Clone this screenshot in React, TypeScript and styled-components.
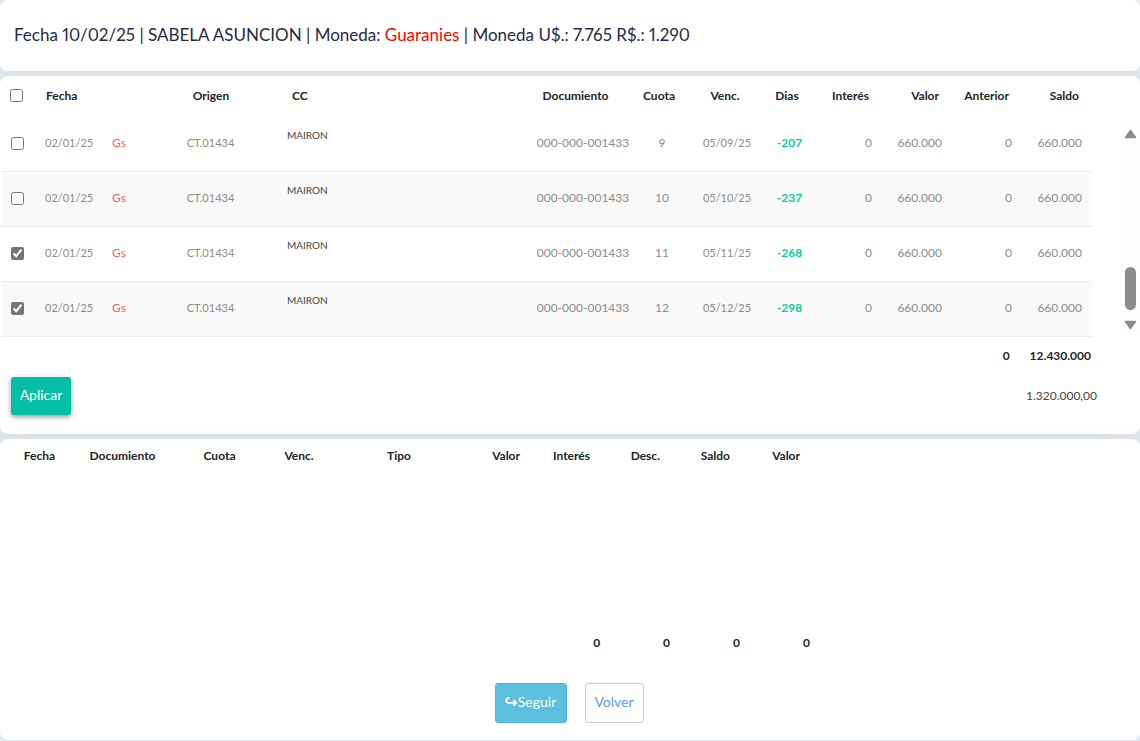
import React, { useState } from 'react';
import styled, { createGlobalStyle } from 'styled-components';

type Align = 'left' | 'center' | 'right';

const GlobalStyle = createGlobalStyle`
  *, *::before, *::after { box-sizing: border-box; }
  body {
    margin: 0;
    background: #e6eaf1;
    color: #212529;
    font-family: Lato, "Liberation Sans", sans-serif;
    font-size: 12px;
    line-height: 18px;
  }
`;

const Page = styled.main`
  display: flex;
  flex-direction: column;
  gap: 5px;
  padding-bottom: 1px;
`;

const Panel = styled.section`
  background: #fff;
  border-radius: 8px;
  box-shadow: 0 0 20px rgba(154, 165, 171, 0.15);
`;

const TitlePanel = styled(Panel)`
  padding: 23px 14px 24px;
`;

const Title = styled.h1`
  margin: 0;
  color: #272a48;
  font-size: 17px;
  font-variant-numeric: proportional-nums;
  font-weight: 400;
  line-height: 24px;
`;

const Currency = styled.span`
  color: #f00;
`;

const HeadWrap = styled.div`
  padding: 5px 51px 7px 0;
`;

const Grid = styled.table`
  width: 100%;
  table-layout: fixed;
  border-collapse: separate;
  border-spacing: 0;
`;

const Col = styled.col<{ $w?: number }>`
  width: ${({ $w }) => ($w ? `${$w}px` : 'auto')};
`;

const Th = styled.th<{ $align?: Align }>`
  height: 29px;
  padding: 0 10px;
  font-weight: 700;
  text-align: ${({ $align = 'left' }) => $align};
  white-space: nowrap;
`;

const Check = styled.input`
  display: block;
  width: 13px;
  height: 13px;
  margin: 0;
  accent-color: #757575;
`;

const BodyWrap = styled.div`
  display: flex;
  justify-content: space-between;
  gap: 29px;
  padding-left: 1px;
`;

const Row = styled.tr`
  &:nth-child(even) { background: #f9f9f9; }
`;

const Td = styled.td<{ $align?: Align }>`
  height: 55px;
  padding: 0 ${({ $align }) => ($align === 'center' ? 0 : 10)}px 2px;
  border-bottom: 1px solid #e9ebed;
  color: #8c8c8c;
  text-align: ${({ $align = 'left' }) => $align};
  white-space: nowrap;
`;

const CodeTd = styled(Td)`
  font-size: 11px;
`;

const CurrencyTd = styled(Td)`
  color: #f95f68;
`;

const ClientTd = styled(Td)`
  padding-top: 9px;
  color: #444;
  font-size: 10px;
  vertical-align: top;
`;

const DaysTd = styled(Td)`
  color: #0acf97;
  font-weight: 700;
`;

const Scrollbar = styled.div`
  display: flex;
  flex: none;
  flex-direction: column;
  align-items: center;
  width: 19px;
  margin-top: 2px;
  padding: 10px 0 7px;
  background: #fcfcfc;
`;

const Thumb = styled.div`
  width: 11px;
  height: 43px;
  margin: auto 0 10px;
  border-radius: 6px;
  background: #8b8b8b;
`;

const Total = styled.div`
  display: flex;
  justify-content: flex-end;
  gap: 20px;
  padding: 10px 49px 0 0;
  font-weight: 700;
`;

const ApplyBar = styled.div`
  display: flex;
  align-items: center;
  justify-content: space-between;
  padding: 12px 43px 19px 11px;
`;

const Amount = styled.output`
  color: #444;
`;

const Button = styled.button`
  height: 40px;
  padding: 0 0 2px;
  border: 1px solid transparent;
  border-radius: 3px;
  font-family: inherit;
  font-size: 14px;
  line-height: 20px;
  cursor: pointer;
`;

const ApplyButton = styled(Button)`
  width: 60px;
  height: 38px;
  background: #02bfa5;
  color: #fff;
  box-shadow: 0 2px 5px rgba(0, 0, 0, 0.4);
`;

const NextButton = styled(Button)`
  display: flex;
  align-items: center;
  justify-content: center;
  width: 72px;
  border-color: #46b8da;
  background: #5bc0de;
  color: #fff;
`;

const BackButton = styled(Button)`
  width: 59px;
  border-color: #ccc;
  background: #fff;
  color: #5a9bf0;
`;

const PaymentPanel = styled(Panel)`
  display: flex;
  flex-direction: column;
  min-height: 301px;
  padding: 2px 0 17px;
`;

const PaymentGrid = styled(Grid)`
  width: 810px;
`;

const PaymentTotals = styled.div`
  display: flex;
  width: 820px;
  margin-top: auto;
  padding: 0 10px 31px;
  justify-content: flex-end;
  gap: 63px;
  font-weight: 700;
`;

const Actions = styled.div`
  display: flex;
  justify-content: center;
  gap: 18px;
  padding-right: 2px;
`;

type Column = { label: string; width?: number; align?: Align };

const pendingColumns: Column[] = [
  { label: 'Fecha', width: 104 },
  { label: 'Origen', width: 142, align: 'center' },
  { label: 'CC' },
  { label: 'Documiento', width: 115, align: 'center' },
  { label: 'Cuota', width: 52, align: 'center' },
  { label: 'Venc.', width: 80, align: 'center' },
  { label: 'Dias', width: 44, align: 'center' },
  { label: 'Interés', width: 70, align: 'right' },
  { label: 'Valor', width: 70, align: 'right' },
  { label: 'Anterior', width: 70, align: 'right' },
  { label: 'Saldo', width: 70, align: 'right' },
];

const bodyWidths = [34, 67, 42, 133, undefined, 108, 50, 80, 45, 70, 70, 70, 70];

const paymentColumns: Column[] = [
  { label: 'Fecha', width: 79, align: 'center' },
  { label: 'Documiento', width: 87, align: 'center' },
  { label: 'Cuota', width: 107, align: 'center' },
  { label: 'Venc.', width: 52, align: 'center' },
  { label: 'Tipo', width: 148, align: 'center' },
  { label: 'Valor', width: 57, align: 'right' },
  { label: 'Interés', width: 70, align: 'right' },
  { label: 'Desc.', width: 70, align: 'right' },
  { label: 'Saldo', width: 70, align: 'right' },
  { label: 'Valor', width: 70, align: 'right' },
];

const installments = [
  { cuota: 9, venc: '05/09/25', dias: -207, selected: false },
  { cuota: 10, venc: '05/10/25', dias: -237, selected: false },
  { cuota: 11, venc: '05/11/25', dias: -268, selected: true },
  { cuota: 12, venc: '05/12/25', dias: -298, selected: true },
];

export default function App() {
  const [selected, setSelected] = useState(installments.map((i) => i.selected));
  const toggle = (index: number) =>
    setSelected((prev) => prev.map((value, i) => (i === index ? !value : value)));
  const all = selected.every(Boolean);

  return (
    <>
      <GlobalStyle />
      <Page>
        <TitlePanel>
          <Title>
            Fecha 10/02/25 | SABELA ASUNCION | Moneda: <Currency>Guaranies</Currency> | Moneda U$.: 7.765 R$.: 1.290
          </Title>
        </TitlePanel>

        <Panel>
          <HeadWrap>
            <Grid>
              <colgroup>
                <Col $w={36} />
                {pendingColumns.map((c) => <Col key={c.label} $w={c.width} />)}
              </colgroup>
              <thead>
                <tr>
                  <Th>
                    <Check
                      type="checkbox"
                      aria-label="Seleccionar todo"
                      checked={all}
                      onChange={() => setSelected(selected.map(() => !all))}
                    />
                  </Th>
                  {pendingColumns.map((c) => <Th key={c.label} $align={c.align}>{c.label}</Th>)}
                </tr>
              </thead>
            </Grid>
          </HeadWrap>
          <BodyWrap>
            <Grid>
              <colgroup>
                {bodyWidths.map((w, i) => <Col key={i} $w={w} />)}
              </colgroup>
              <tbody>
                {installments.map((row, i) => (
                  <Row key={row.cuota}>
                    <Td>
                      <Check
                        type="checkbox"
                        aria-label={`Cuota ${row.cuota}`}
                        checked={selected[i]}
                        onChange={() => toggle(i)}
                      />
                    </Td>
                    <CodeTd>02/01/25</CodeTd>
                    <CurrencyTd>Gs</CurrencyTd>
                    <CodeTd $align="center">CT.01434</CodeTd>
                    <ClientTd>MAIRON</ClientTd>
                    <Td $align="center">000-000-001433</Td>
                    <Td $align="center">{row.cuota}</Td>
                    <CodeTd $align="center">{row.venc}</CodeTd>
                    <DaysTd $align="center">{row.dias}</DaysTd>
                    <Td $align="right">0</Td>
                    <Td $align="right">660.000</Td>
                    <Td $align="right">0</Td>
                    <Td $align="right">660.000</Td>
                  </Row>
                ))}
              </tbody>
            </Grid>
            <Scrollbar aria-hidden="true">
              <svg width="13" height="10" viewBox="0 0 13 10">
                <path d="M6.5 1.5 11.5 8.5H1.5Z" fill="#8b8b8b" stroke="#8b8b8b" strokeWidth="1.5" strokeLinejoin="round" />
              </svg>
              <Thumb />
              <svg width="13" height="10" viewBox="0 0 13 10">
                <path d="M6.5 8.5 1.5 1.5H11.5Z" fill="#8b8b8b" stroke="#8b8b8b" strokeWidth="1.5" strokeLinejoin="round" />
              </svg>
            </Scrollbar>
          </BodyWrap>
          <Total>
            <span>0</span>
            <span>12.430.000</span>
          </Total>
          <ApplyBar>
            <ApplyButton type="button">Aplicar</ApplyButton>
            <Amount>1.320.000,00</Amount>
          </ApplyBar>
        </Panel>

        <PaymentPanel>
          <PaymentGrid>
            <colgroup>
              {paymentColumns.map((c, i) => <Col key={i} $w={c.width} />)}
            </colgroup>
            <thead>
              <tr>
                {paymentColumns.map((c, i) => <Th key={i} $align={c.align}>{c.label}</Th>)}
              </tr>
            </thead>
          </PaymentGrid>
          <PaymentTotals>
            <span>0</span>
            <span>0</span>
            <span>0</span>
            <span>0</span>
          </PaymentTotals>
          <Actions>
            <NextButton type="button">
              <svg width="13" height="12" viewBox="0 0 13 12" aria-hidden="true">
                <path d="M4.5 1.8C2.2 1.8 1.2 3 1.2 4.4 1.2 6 2.6 6.8 4.5 6.8H10.5M8.3 4 11.3 6.8 8.3 9.6" fill="none" stroke="#fff" strokeWidth="1.8" />
              </svg>
              Seguir
            </NextButton>
            <BackButton type="button">Volver</BackButton>
          </Actions>
        </PaymentPanel>
      </Page>
    </>
  );
}
